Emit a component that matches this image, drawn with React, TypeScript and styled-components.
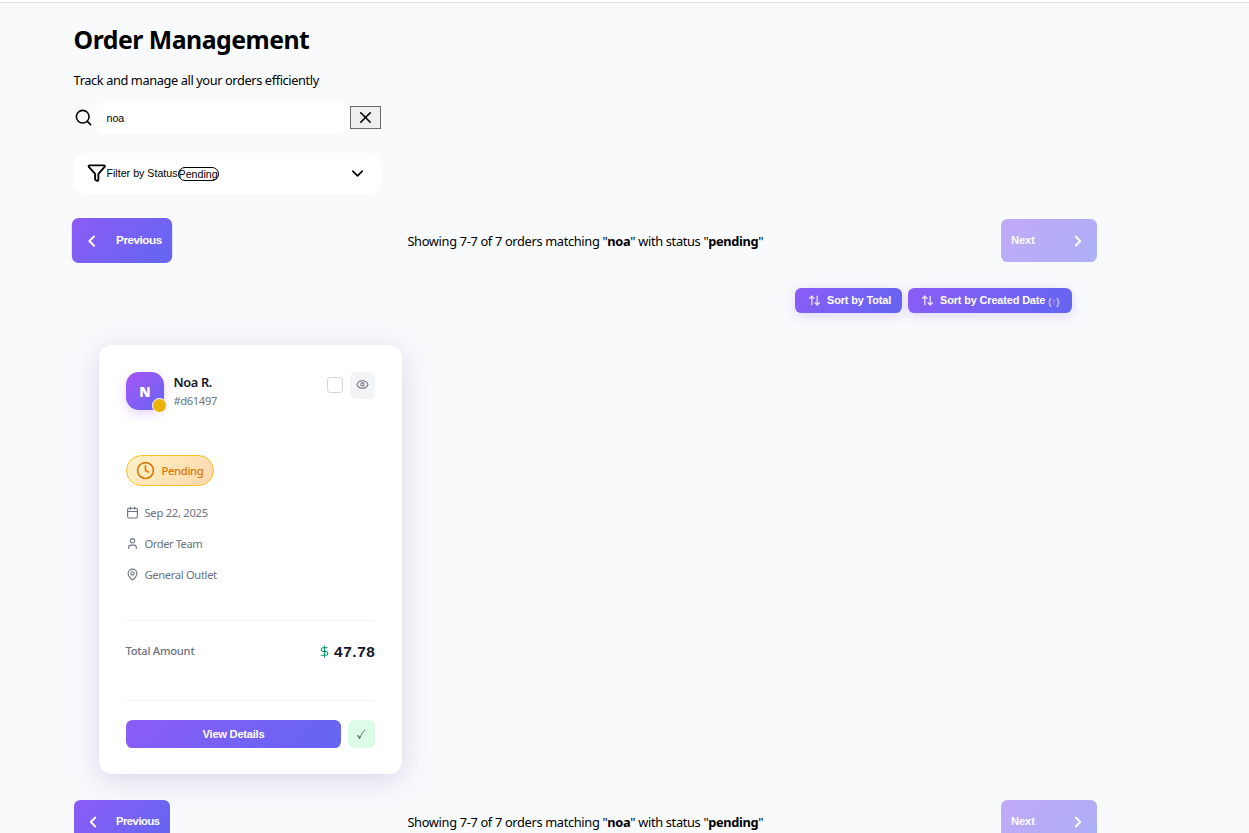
import React from 'react';
import styled, { createGlobalStyle, css } from 'styled-components';
import {
  ArrowUpDown, Calendar, ChevronDown, ChevronLeft, ChevronRight, Clock, DollarSign, Eye, Funnel, MapPin, Search, User, X,
} from 'lucide-react';

const sans = "'Noto Sans', 'Open Sans', sans-serif";
const arial = "'Liberation Sans', Arial, sans-serif";
const gradient = 'linear-gradient(135deg, #8b5cf6, #6366f1)';

const GlobalStyle = createGlobalStyle`
  *, *::before, *::after { box-sizing: border-box; }
  html, body { margin: 0; height: 100%; overflow: hidden; }
  body { background: #f9fafc; color: #000; font: 12.8px/18px ${sans}; }
  button, input { font-family: ${arial}; }
  svg { flex: none; display: block; }
`;

const Screen = styled.div`
  height: 833px;
  overflow: hidden;
`;

const TopBar = styled.div`
  height: 3px;
  background: #fff;
  border-bottom: 1px solid #e0e3e4;
`;

const Main = styled.main`
  width: 1023.5px;
  margin-left: 73.6px;
`;

const Title = styled.h1`
  margin: 0;
  padding-top: 18px;
  font-size: 24.8px;
  line-height: 37px;
  font-weight: 700;
  letter-spacing: -0.5px;
  white-space: nowrap;
`;

const Subtitle = styled.p`
  margin: 13px 0 12px;
  letter-spacing: -0.4px;
`;

const SearchRow = styled.div`
  display: flex;
  align-items: center;
  width: 307px;
  height: 33px;
`;

const SearchInput = styled.input`
  width: 256px;
  height: 33px;
  margin: 0 1px 0 1px;
  padding: 1px 12.9px 0;
  border: 0;
  border-radius: 13px;
  background: #fff;
  font-size: 10.67px;
  outline: none;
`;

const ClearButton = styled.button`
  display: flex;
  align-items: center;
  justify-content: center;
  width: 31px;
  height: 23px;
  padding: 0;
  border: 1px solid #6b6b6b;
  background: #efefef;
  color: #000;
`;

const FilterButton = styled.button`
  display: flex;
  align-items: center;
  width: 307px;
  height: 41px;
  margin-top: 19px;
  padding: 0 14px 0 13.4px;
  border: 0;
  border-radius: 13px;
  background: #fff;
  color: #000;
  font-size: 10.67px;

  svg:first-child { margin-bottom: 1px; }
  svg:last-child { margin-left: auto; }
`;

const FilterValue = styled.span`
  height: 14px;
  margin-top: 1px;
  border: 1px solid #000;
  border-radius: 8px;
  line-height: 13px;
`;

const FilterLabel = styled.span`
  padding-bottom: 1px;
`;

const Pager = styled.nav`
  display: flex;
  align-items: center;
  justify-content: space-between;
  height: 43px;
`;

const PageButton = styled.button<{ $raised?: boolean }>`
  display: flex;
  align-items: center;
  justify-content: space-between;
  width: 96px;
  height: 43px;
  padding: 0 10px;
  border: 0;
  border-radius: 6.4px;
  background: ${gradient};
  color: #fff;
  font-size: 11.2px;
  font-weight: 700;
  letter-spacing: -0.45px;

  span { padding-bottom: 1px; }
  &:disabled { opacity: 0.5; letter-spacing: -0.15px; }
  ${p => p.$raised && css`transform: scale(1.045);`}
`;

const Summary = styled.span`
  letter-spacing: -0.33px;
  white-space: nowrap;
`;

const SortBar = styled.div`
  display: flex;
  justify-content: flex-end;
  gap: 6px;
  margin: 26px 25px 32px 0;
`;

const SortButton = styled.button<{ $width: number }>`
  display: flex;
  align-items: center;
  width: ${p => p.$width}px;
  height: 25px;
  padding: 0 0 0 13px;
  border: 0;
  border-radius: 6.4px;
  background: ${gradient};
  box-shadow: 0 3px 12px rgba(139, 92, 246, 0.22);
  color: #fff;
  font-size: 10.9px;
  font-weight: 700;
  letter-spacing: -0.13px;
  white-space: nowrap;

  svg { margin-right: 6px; opacity: 0.85; }
  span { padding-bottom: 1px; }
`;

const Direction = styled.small`
  margin: 1px 0 0 3px;
  font-size: 9.6px;
  font-weight: 700;
  letter-spacing: 0;
  opacity: 0.6;
`;

const Card = styled.article`
  width: 303px;
  height: 429px;
  margin: 0 0 26px 25.4px;
  padding: 27px 26.5px 26px 27px;
  border-radius: 13px;
  background: #fff;
  box-shadow: 0 6px 28px rgba(79, 80, 160, 0.2);
`;

const CardHeader = styled.header`
  display: flex;
  height: 83px;
`;

const Avatar = styled.div`
  position: relative;
  width: 38px;
  height: 38px;
  margin-right: 9.5px;
  border-radius: 12.8px;
  background: linear-gradient(135deg, #a855f7, #6366f1);
  box-shadow: 0 4px 12px rgba(168, 85, 247, 0.25);
  color: #fff;
  font-size: 13.6px;
  font-weight: 900;
  line-height: 40px;
  text-align: center;
`;

const StatusDot = styled.span`
  position: absolute;
  right: -3px;
  bottom: -3px;
  width: 15px;
  height: 15px;
  border: 1.6px solid #fff;
  border-radius: 50%;
  background: #eab308;
`;

const Customer = styled.div`
  flex: 1;
  padding-top: 1px;
`;

const Name = styled.div`
  color: #111827;
  font-weight: 600;
  line-height: 19px;
  letter-spacing: -0.35px;
`;

const OrderId = styled.div`
  color: #6b7280;
  font-size: 11.2px;
  line-height: 18px;
  letter-spacing: -0.38px;
`;

const Checkbox = styled.span`
  width: 16px;
  height: 16px;
  margin: 5px 7px 0 0;
  border: 1px solid #d1d5db;
  border-radius: 3.2px;
  background: #fff;
`;

const EyeButton = styled.button`
  display: flex;
  justify-content: center;
  width: 25px;
  height: 27px;
  margin-right: 0.5px;
  padding: 6px 0 0;
  border: 0;
  border-radius: 6.4px;
  background: #f3f4f6;
  color: #6b7280;
`;

const Status = styled.div`
  display: flex;
  align-items: center;
  gap: 6.5px;
  width: 88px;
  height: 31px;
  padding-left: 9px;
  border: 1px solid #fbbf24;
  border-radius: 16px;
  background: linear-gradient(135deg, #fef3c7, #fed7aa);
  color: #d97706;
  font-size: 11.2px;
  font-weight: 500;
  letter-spacing: -0.32px;
`;

const Details = styled.div`
  display: grid;
  gap: 13px;
  margin-top: 18px;
`;

const Detail = styled.div<{ $tracking: number }>`
  display: flex;
  align-items: center;
  gap: 5.5px;
  height: 18px;
  color: #6b7280;
  font-size: 11.2px;
  letter-spacing: ${p => p.$tracking}px;

  svg { margin-bottom: 1px; }
`;

const TotalRow = styled.div`
  display: flex;
  justify-content: space-between;
  height: 80px;
  margin-top: 36px;
  padding-top: 20px;
  border-top: 1px solid #f3f4f6;
`;

const TotalLabel = styled.span`
  margin-left: -0.6px;
  color: #6b7280;
  font-size: 11.2px;
  font-weight: 500;
  line-height: 20px;
  letter-spacing: -0.25px;
`;

const Amount = styled.strong`
  display: flex;
  align-items: center;
  gap: 3px;
  height: 21px;
  color: #111827;
  font-family: ${arial};
  font-size: 15.4px;
  letter-spacing: 0.6px;

  svg { margin-bottom: 1px; color: #059669; }
`;

const Actions = styled.footer`
  display: flex;
  gap: 7px;
  padding-top: 19px;
  border-top: 1px solid #f3f4f6;
`;

const ViewButton = styled.button`
  flex: none;
  width: 215px;
  height: 28px;
  padding: 0;
  border: 0;
  border-radius: 6.4px;
  background: ${gradient};
  color: #fff;
  font-size: 11.2px;
  font-weight: 700;
  letter-spacing: -0.28px;
`;

const DoneButton = styled.button`
  flex: none;
  display: flex;
  align-items: center;
  justify-content: center;
  width: 27px;
  height: 28px;
  padding: 0;
  border: 0;
  border-radius: 6.4px;
  background: #dcfce7;
  color: #2c7547;
`;

function CheckMark() {
  return (
    <svg width="9" height="11" viewBox="0 0 9 11" fill="none" stroke="currentColor" strokeLinecap="round">
      <path d="M1 6.6L2.7 9" strokeWidth="1.3" />
      <path d="M2.8 9.1C4 6.1 5.6 3.1 7.8 1.2" strokeWidth="0.9" />
    </svg>
  );
}

function OrderPager({ hovered }: { hovered?: boolean }) {
  return (
    <Pager>
      <PageButton $raised={hovered}><ChevronLeft size={18} strokeWidth={2.4} /><span>Previous</span></PageButton>
      <Summary>Showing 7-7 of 7 orders matching "<b>noa</b>" with status "<b>pending</b>"</Summary>
      <PageButton disabled><span>Next</span><ChevronRight size={18} strokeWidth={2.4} /></PageButton>
    </Pager>
  );
}

const Spacer = styled.div`
  height: 25px;
`;

export default function App() {
  return (
    <Screen>
      <GlobalStyle />
      <TopBar />
      <Main>
        <Title>Order Management</Title>
        <Subtitle>Track and manage all your orders efficiently</Subtitle>
        <SearchRow>
          <Search size={19} />
          <SearchInput defaultValue="noa" />
          <ClearButton><X size={19} /></ClearButton>
        </SearchRow>
        <FilterButton>
          <Funnel size={19.5} strokeWidth={2.3} />
          <FilterLabel>Filter by Status</FilterLabel>
          <FilterValue>Pending</FilterValue>
          <ChevronDown size={19} />
        </FilterButton>
        <Spacer />
        <OrderPager hovered />
        <SortBar>
          <SortButton $width={107}><ArrowUpDown size={13} strokeWidth={2.4} /><span>Sort by Total</span></SortButton>
          <SortButton $width={164}><ArrowUpDown size={13} strokeWidth={2.4} /><span>Sort by Created Date</span><Direction>(↑)</Direction></SortButton>
        </SortBar>
        <Card>
          <CardHeader>
            <Avatar>N<StatusDot /></Avatar>
            <Customer>
              <Name>Noa R.</Name>
              <OrderId>#d61497</OrderId>
            </Customer>
            <Checkbox />
            <EyeButton><Eye size={13} /></EyeButton>
          </CardHeader>
          <Status><Clock size={19} />Pending</Status>
          <Details>
            <Detail $tracking={-0.27}><Calendar size={13} />Sep 22, 2025</Detail>
            <Detail $tracking={-0.45}><User size={13} />Order Team</Detail>
            <Detail $tracking={-0.34}><MapPin size={13} />General Outlet</Detail>
          </Details>
          <TotalRow>
            <TotalLabel>Total Amount</TotalLabel>
            <Amount><DollarSign size={13} />47.78</Amount>
          </TotalRow>
          <Actions>
            <ViewButton>View Details</ViewButton>
            <DoneButton aria-label="Complete order"><CheckMark /></DoneButton>
          </Actions>
        </Card>
        <OrderPager />
      </Main>
    </Screen>
  );
}
